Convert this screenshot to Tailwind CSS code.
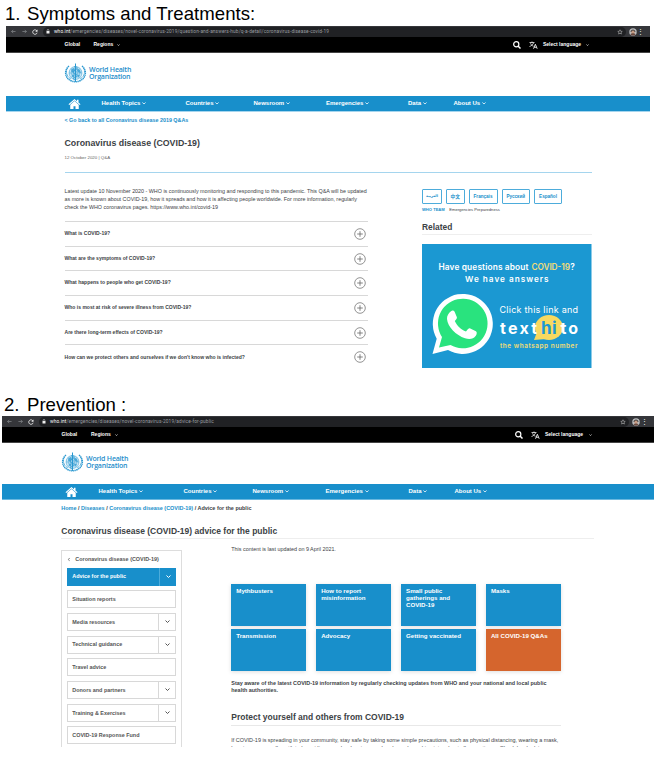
<!DOCTYPE html>
<html lang="en">
<head>
<meta charset="utf-8">
<title>WHO resources</title>
<script src="https://cdn.jsdelivr.net/npm/@tailwindcss/browser@4"></script>
</head>
<body class="bg-white">
<svg class="hidden">
  <symbol id="chev" viewBox="0 0 10 6"><path d="M1 1l4 4 4-4" fill="none" stroke="currentColor" stroke-width="2"/></symbol>
  <symbol id="home" viewBox="0 0 24 20"><path d="M12 0L0 10.500l1.500 1.600L12 3l10.500 9.100L24 10.500l-4-3.500V1.500h-3v2.900z"/><path d="M12 4.100L3.500 11.500V20h6.500v-5.500h4V20h6.500v-8.500z"/></symbol>
  <symbol id="plus" viewBox="0 0 12 12"><circle cx="6" cy="6" r="5.300" fill="none" stroke="#777" stroke-width=".8"/><path d="M6 3.200v5.600M3.200 6h5.600" stroke="#666" stroke-width=".8"/></symbol>
  <symbol id="search" viewBox="0 0 16 16"><circle cx="6.500" cy="6.500" r="5.200" fill="none" stroke="currentColor" stroke-width="2.400"/><path d="M10 10l5 5" stroke="currentColor" stroke-width="3"/></symbol>
  <symbol id="lang" viewBox="0 0 18 16"><path d="M1 3h10M6 1v2M3 4.500c1 3 4 5.500 6 6M9 4C8 7 4.500 10 1 11" fill="none" stroke="currentColor" stroke-width="1.500"/><path d="M9 15.500l3.700-9 3.700 9M10.300 12.500h4.800" fill="none" stroke="currentColor" stroke-width="1.700"/></symbol>
  <symbol id="emblem" viewBox="0 0 46 40">
    <g fill="none" stroke="#2a98d0">
      <circle cx="23" cy="20" r="13" fill="#c5e4f4" stroke-width="1"/>
      <circle cx="23" cy="20" r="8.500" stroke-width=".8"/><circle cx="23" cy="20" r="4.500" stroke-width=".8"/>
      <path d="M10 20h26M14 11l18 18M32 11L14 29" stroke-width=".7"/>
      <path d="M15 12l5-2 2 4-4 5-4-2zM27 11l5 3 2 6-5-1-3-4zM16 23l5 1-1 6-4-3zM27 23l5 1-4 6z" fill="#4aa8d8" stroke="none"/>
      <path d="M23 1v37" stroke-width="2"/>
      <path d="M20 8c7-3 8 4 3 6s-7 6-1 8 5 5 0 7-3 4 0 5" stroke-width="1.700"/>
      <path d="M10 6C0 14 1 29 13 35c4 2 7 2 10 3M36 6c10 8 9 23-3 29-4 2-7 2-10 3" stroke-width="2.800" stroke-dasharray="2.800 1"/>
      <path d="M7 10C3 17 5 27 14 32M39 10c4 7 2 17-7 22" stroke-width="1.800" stroke-dasharray="2 1"/>
    </g>
  </symbol>
  <symbol id="star" viewBox="0 0 12 12"><path d="M6 1.500l1.300 3 3.200.3-2.400 2.100.7 3.200L6 8.400l-2.800 1.700.7-3.200L1.500 4.800l3.200-.3z" fill="none" stroke="#ccc" stroke-width="1"/></symbol>
  <symbol id="avatar" viewBox="0 0 16 16"><circle cx="8" cy="8" r="7.500" fill="#b9bbbd"/><path d="M3 8c0-7 10-7 10 0z" fill="#4a4542"/><circle cx="8" cy="8.300" r="3.200" fill="#c79b83"/><path d="M3 13c1-3 9-3 10 0-2 3-8 3-10 0z" fill="#6d4b40"/></symbol>
  <symbol id="arrow" viewBox="0 0 12 10"><path d="M11 5H1.500M5.500 1l-4 4 4 4" fill="none" stroke="currentColor" stroke-width="1.400"/></symbol>
  <symbol id="reload" viewBox="0 0 12 12"><path d="M10 4A4.500 4.500 0 1 0 10.300 7.500" fill="none" stroke="#eee" stroke-width="1.800"/><path d="M11 .8v4.500H6.500z" fill="#eee"/></symbol>
  <symbol id="lock" viewBox="0 0 8 10"><path d="M1 4h6v5H1z" fill="#eee"/><path d="M2.300 4V2.500a1.700 1.700 0 0 1 3.400 0V4" fill="none" stroke="#eee" stroke-width="1"/></symbol>
</svg>

<main class="w-[657px] h-[770px] overflow-hidden font-['Liberation_Sans',Arial,sans-serif] text-[#3c4245] whitespace-nowrap">
  <h1 class="h-[26px] pl-[5px] pt-[3px] flex text-[18.600px] leading-[21px] text-black"><span class="w-[22px]">1.</span><span class="tracking-[.04px]">Symptoms and Treatments:</span></h1>

  <section class="ml-[6px] w-[644px] h-[364px]">
    <div class="h-[11px] bg-[#35363a] flex items-center pl-[5px] pr-[5px] text-[#9a9da1]">
      <svg class="w-[5px] h-[5px]"><use href="#arrow"/></svg>
      <svg class="ml-[6px] w-[5px] h-[5px] rotate-180"><use href="#arrow"/></svg>
      <svg class="ml-[5px] w-[6px] h-[6px]"><use href="#reload"/></svg>
      <div class="ml-[5px] w-[586px] h-[10px] rounded-full bg-[#202124] flex items-center pl-[3px] pr-[3px]">
        <svg class="w-[4px] h-[5px]"><use href="#lock"/></svg>
        <span class="ml-[4px] pt-[1px] font-['Roboto'] text-[4.800px] tracking-[.112px] leading-none"><span class="text-white">who.int</span>/emergencies/diseases/novel-coronavirus-2019/question-and-answers-hub/q-a-detail/coronavirus-disease-covid-19</span>
        <svg class="ml-auto w-[6px] h-[6px]"><use href="#star"/></svg>
      </div>
      <svg class="ml-[3px] w-[8px] h-[8px]"><use href="#avatar"/></svg>
      <span class="ml-auto mr-[1px] text-[7px] leading-none text-white">⋮</span>
    </div>
    <div class="h-[16px] bg-black border-b border-[#444] text-white flex items-center pt-[1px] pl-[58.500px] text-[5px] font-bold">
      <span class="w-[29px]">Global</span><span class="w-[23.500px]">Regions</span><svg class="w-[3px] h-[2px]"><use href="#chev"/></svg>
      <svg class="ml-[393px] w-[8px] h-[8px]"><use href="#search"/></svg>
      <svg class="ml-[8px] w-[9px] h-[8px]"><use href="#lang"/></svg>
      <span class="ml-[5px] w-[43px]">Select language</span><svg class="w-[3px] h-[2px]"><use href="#chev"/></svg>
    </div>
    <div class="h-[43px] pl-[58px] pt-[10px] flex text-[#1e8dcb]">
      <svg class="w-[23px] h-[20px]"><use href="#emblem"/></svg>
      <div class="ml-[2px] pt-[3px] font-['Open_Sans'] font-semibold text-[7px] tracking-[-.2px] leading-[7.300px]"><div>World Health</div><div>Organization</div></div>
    </div>
    <nav class="h-[15px] bg-[#188fcb] shadow-[0_1px_0_#a5d5ee] text-white flex items-center pl-[62px] text-[6px] font-bold">
      <svg class="w-[13px] h-[10px] fill-white"><use href="#home"/></svg>
      <span class="ml-[20.500px] w-[84px]">Health Topics <svg class="inline w-[4px] h-[2.500px]"><use href="#chev"/></svg></span>
      <span class="w-[68px]">Countries <svg class="inline w-[4px] h-[2.500px]"><use href="#chev"/></svg></span>
      <span class="w-[72.500px]">Newsroom <svg class="inline w-[4px] h-[2.500px]"><use href="#chev"/></svg></span>
      <span class="w-[82px]">Emergencies <svg class="inline w-[4px] h-[2.500px]"><use href="#chev"/></svg></span>
      <span class="w-[45.500px]">Data <svg class="inline w-[4px] h-[2.500px]"><use href="#chev"/></svg></span>
      <span>About Us <svg class="inline w-[4px] h-[2.500px]"><use href="#chev"/></svg></span>
    </nav>
    <div class="ml-[58.500px] w-[527px]">
      <div class="pt-[6px] h-[26px] text-[5.370px] leading-[7px] font-bold text-[#188fcb]">&lt; Go back to all Coronavirus disease 2019 Q&amp;As</div>
      <h2 class="h-[17px] text-[8.800px] leading-[12px] font-bold">Coronavirus disease (COVID-19)</h2>
      <div class="h-[19px] border-b border-[#a5d5ee] text-[4.400px] leading-[8px] text-[#666]">12 October 2020 | Q&amp;A</div>
      <div class="flex">
        <div class="w-[303.500px] pt-[14px]">
          <p class="h-[34px] text-[5.360px] leading-[8px]">Latest update 10 November 2020 - WHO is continuously monitoring and responding to this pandemic. This Q&amp;A will be updated<br>as more is known about COVID-19, how it spreads and how it is affecting people worldwide. For more information, regularly<br>check the WHO coronavirus pages. https://www.who.int/covid-19</p>
          <div class="text-[5.040px] font-bold">
            <div class="h-[24.700px] border-t border-[#d8d8d8] flex items-center justify-between pr-[2px]"><span>What is COVID-19?</span><svg class="w-[12px] h-[12px]"><use href="#plus"/></svg></div>
            <div class="h-[24.700px] border-t border-[#d8d8d8] flex items-center justify-between pr-[2px]"><span>What are the symptoms of COVID-19?</span><svg class="w-[12px] h-[12px]"><use href="#plus"/></svg></div>
            <div class="h-[24.700px] border-t border-[#d8d8d8] flex items-center justify-between pr-[2px]"><span>What happens to people who get COVID-19?</span><svg class="w-[12px] h-[12px]"><use href="#plus"/></svg></div>
            <div class="h-[24.700px] border-t border-[#d8d8d8] flex items-center justify-between pr-[2px]"><span>Who is most at risk of severe illness from COVID-19?</span><svg class="w-[12px] h-[12px]"><use href="#plus"/></svg></div>
            <div class="h-[24.700px] border-t border-[#d8d8d8] flex items-center justify-between pr-[2px]"><span>Are there long-term effects of COVID-19?</span><svg class="w-[12px] h-[12px]"><use href="#plus"/></svg></div>
            <div class="h-[24.700px] border-t border-[#d8d8d8] flex items-center justify-between pr-[2px]"><span>How can we protect others and ourselves if we don't know who is infected?</span><svg class="w-[12px] h-[12px]"><use href="#plus"/></svg></div>
          </div>
        </div>
        <div class="ml-[54px] w-[169.500px] pt-[16px]">
          <div class="flex gap-[4px] text-[4.600px] leading-[13px] font-bold text-[#188fcb] text-center font-['Liberation_Sans','DejaVu_Sans','Noto_Sans_CJK_SC',sans-serif]">
            <span class="w-[20px] h-[15px] border border-[#4dacdb] rounded-[1px] text-[3.600px]">العربية</span>
            <span class="w-[18.500px] h-[15px] border border-[#4dacdb] rounded-[1px] text-[4.700px]">中文</span>
            <span class="w-[29px] h-[15px] border border-[#4dacdb] rounded-[1px]">Français</span>
            <span class="w-[28.500px] h-[15px] border border-[#4dacdb] rounded-[1px]">Русский</span>
            <span class="w-[28px] h-[15px] border border-[#4dacdb] rounded-[1px]">Español</span>
          </div>
          <div class="h-[19px] pt-[3px] text-[4.100px] leading-[6px]"><b class="text-[#188fcb]">WHO TEAM</b><span class="ml-[4.500px]">Emergencies Preparedness</span></div>
          <h3 class="h-[12px] border-b border-[#eee] text-[8.400px] leading-[9px] font-bold">Related</h3>
          <svg class="mt-[9px] block w-[169.500px] h-[124px]" viewBox="0 0 169.500 124" font-family="Inter, sans-serif">
            <path d="M0 0h169.500v124H0z" fill="#1b98d2"/>
            <text x="16.500" y="26" font-size="8.300" fill="#fff" font-weight="600" textLength="90">Have questions about</text>
            <text x="109.500" y="26" font-size="8.300" fill="#f0dc78" font-weight="600" textLength="38.500">COVID-19</text>
            <text x="148.200" y="26" font-size="8.300" fill="#fff" font-weight="600">?</text>
            <text x="43" y="37.500" font-size="8.200" fill="#fff" font-weight="600" textLength="83.500">We have answers</text>
            <path d="M10.500 110l4.200-15.300A30 30 0 1 1 26 106z" fill="#fff"/>
            <path d="M17 103.500l3-10.500A24.800 24.800 0 1 1 28.500 101z" fill="#29e37e"/>
            <path d="M29 67.300c1.300-1.200 3-.9 3.700.8l2.100 4.800c.5 1.200-.3 2.100-2 4 2.800 5.500 6 8.300 11.200 10.700 2.200-2.800 3-3.700 4.300-3.100l5.600 2.800c1.200.7 1.100 2.700-.1 4.500-2.300 3.300-6.300 4.100-10.800 2.500-9-3-17.300-11.500-18-19.300-.2-3.200 1.500-5.700 4-7.700z" fill="#fff"/>
            <text x="77.500" y="68.500" font-size="9" fill="#fff" textLength="78.500">Click this link and</text>
            <ellipse cx="127" cy="83.500" rx="14" ry="12.500" fill="#f7d95f"/><path d="M115 88l-3 8 12-1z" fill="#f7d95f"/>
            <text x="78" y="89.500" font-size="16" font-weight="700" fill="#fff" textLength="37">text</text>
            <text x="119" y="89.500" font-size="17" font-weight="700" fill="#1b98d2" textLength="15.500">hi</text>
            <text x="138.500" y="89.500" font-size="16" font-weight="700" fill="#fff" textLength="17.500">to</text>
            <text x="78" y="103.500" font-size="6.400" font-weight="600" fill="#f0dc78" textLength="77.500">the whatsapp number</text>
          </svg>
        </div>
      </div>
    </div>
  </section>

  <h1 class="h-[26px] pl-[4px] pt-[4px] flex text-[18.600px] leading-[21px] text-black"><span class="w-[23px]">2.</span><span>Prevention :</span></h1>

  <section class="ml-[2px] w-[652px] h-[331px] overflow-hidden">
    <div class="h-[11px] bg-[#35363a] flex items-center pl-[5px] pr-[5px] text-[#9a9da1]">
      <svg class="w-[5px] h-[5px]"><use href="#arrow"/></svg>
      <svg class="ml-[6px] w-[5px] h-[5px] rotate-180"><use href="#arrow"/></svg>
      <svg class="ml-[5px] w-[6px] h-[6px]"><use href="#reload"/></svg>
      <div class="ml-[5px] w-[590px] h-[10px] rounded-full bg-[#202124] flex items-center pl-[3px] pr-[3px]">
        <svg class="w-[4px] h-[5px]"><use href="#lock"/></svg>
        <span class="ml-[4px] pt-[1px] font-['Roboto'] text-[4.800px] tracking-[.125px] leading-none"><span class="text-white">who.int</span>/emergencies/diseases/novel-coronavirus-2019/advice-for-public</span>
        <svg class="ml-auto w-[6px] h-[6px]"><use href="#star"/></svg>
      </div>
      <svg class="ml-[3px] w-[8px] h-[8px]"><use href="#avatar"/></svg>
      <span class="ml-auto mr-[1px] text-[7px] leading-none text-white">⋮</span>
    </div>
    <div class="h-[16px] bg-black border-b border-[#444] text-white flex items-center pt-[1px] pl-[59.500px] text-[5px] font-bold">
      <span class="w-[29.500px]">Global</span><span class="w-[23.500px]">Regions</span><svg class="w-[3px] h-[2px]"><use href="#chev"/></svg>
      <svg class="ml-[397px] w-[8px] h-[8px]"><use href="#search"/></svg>
      <svg class="ml-[8px] w-[9px] h-[8px]"><use href="#lang"/></svg>
      <span class="ml-[5.500px] w-[43.500px]">Select language</span><svg class="w-[3px] h-[2px]"><use href="#chev"/></svg>
    </div>
    <div class="h-[41px] pl-[59px] pt-[9px] flex text-[#1e8dcb]">
      <svg class="w-[23px] h-[20px]"><use href="#emblem"/></svg>
      <div class="ml-[2px] pt-[3px] font-['Open_Sans'] font-semibold text-[7px] tracking-[-.2px] leading-[7.300px]"><div>World Health</div><div>Organization</div></div>
    </div>
    <nav class="h-[15px] bg-[#188fcb] shadow-[0_1px_0_#6bb8df] text-white flex items-center pl-[63px] text-[6px] font-bold">
      <svg class="w-[13px] h-[10px] fill-white"><use href="#home"/></svg>
      <span class="ml-[20.500px] w-[85px]">Health Topics <svg class="inline w-[4px] h-[2.500px]"><use href="#chev"/></svg></span>
      <span class="w-[69px]">Countries <svg class="inline w-[4px] h-[2.500px]"><use href="#chev"/></svg></span>
      <span class="w-[73px]">Newsroom <svg class="inline w-[4px] h-[2.500px]"><use href="#chev"/></svg></span>
      <span class="w-[83px]">Emergencies <svg class="inline w-[4px] h-[2.500px]"><use href="#chev"/></svg></span>
      <span class="w-[46px]">Data <svg class="inline w-[4px] h-[2.500px]"><use href="#chev"/></svg></span>
      <span>About Us <svg class="inline w-[4px] h-[2.500px]"><use href="#chev"/></svg></span>
    </nav>
    <div class="ml-[59.300px] w-[532.700px]">
      <div class="pt-[5px] h-[26px] text-[5.460px] leading-[8px] font-bold"><span class="text-[#188fcb]">Home</span> / <span class="text-[#188fcb]">Diseases</span> / <span class="text-[#188fcb]">Coronavirus disease (COVID-19)</span> / Advice for the public</div>
      <h2 class="h-[14px] border-b border-[#eee] text-[8.500px] leading-[12px] font-bold">Coronavirus disease (COVID-19) advice for the public</h2>
      <div class="flex">
        <aside class="mt-[11px] w-[121px] h-[210px] border border-[#ddd] px-[5px] pt-[3.500px] text-[5.430px] font-bold text-[#555]">
          <div class="h-[13px] flex items-center pb-[3px]"><svg class="w-[4px] h-[3px] rotate-90"><use href="#chev"/></svg><span class="ml-[4px]">Coronavirus disease (COVID-19)</span></div>
          <div class="flex flex-col gap-[4.700px]">
            <div class="h-[18px] bg-[#188fcb] text-white flex items-center pl-[5px]"><span>Advice for the public</span><span class="ml-auto w-[17px] h-full border-l border-[#4dacdb] flex items-center justify-center"><svg class="w-[5px] h-[3px]"><use href="#chev"/></svg></span></div>
            <div class="h-[18px] border border-[#d8d8d8] flex items-center pl-[4px]"><span>Situation reports</span></div>
            <div class="h-[18px] border border-[#d8d8d8] flex items-center pl-[4px]"><span>Media resources</span><span class="ml-auto w-[17px] h-full border-l border-[#d8d8d8] flex items-center justify-center"><svg class="w-[5px] h-[3px]"><use href="#chev"/></svg></span></div>
            <div class="h-[18px] border border-[#d8d8d8] flex items-center pl-[4px]"><span>Technical guidance</span><span class="ml-auto w-[17px] h-full border-l border-[#d8d8d8] flex items-center justify-center"><svg class="w-[5px] h-[3px]"><use href="#chev"/></svg></span></div>
            <div class="h-[18px] border border-[#d8d8d8] flex items-center pl-[4px]"><span>Travel advice</span></div>
            <div class="h-[18px] border border-[#d8d8d8] flex items-center pl-[4px]"><span>Donors and partners</span><span class="ml-auto w-[17px] h-full border-l border-[#d8d8d8] flex items-center justify-center"><svg class="w-[5px] h-[3px]"><use href="#chev"/></svg></span></div>
            <div class="h-[18px] border border-[#d8d8d8] flex items-center pl-[4px]"><span>Training &amp; Exercises</span><span class="ml-auto w-[17px] h-full border-l border-[#d8d8d8] flex items-center justify-center"><svg class="w-[5px] h-[3px]"><use href="#chev"/></svg></span></div>
            <div class="h-[18px] border border-[#d8d8d8] flex items-center pl-[4px]"><span>COVID-19 Response Fund</span></div>
          </div>
        </aside>
        <div class="ml-[49px] w-[329.500px] pt-[6px]">
          <p class="h-[38.500px] text-[5.400px] leading-[8px]">This content is last updated on 9 April 2021.</p>
          <div class="grid grid-cols-4 gap-x-[10px] gap-y-[3px] text-[6.150px] leading-[6.800px] font-bold text-white">
            <div class="h-[42px] bg-[#188fcb] shadow-[0_1px_4px_#0002] pl-[5px] pt-[4.500px]">Mythbusters</div>
            <div class="h-[42px] bg-[#188fcb] shadow-[0_1px_4px_#0002] pl-[5px] pt-[4.500px]">How to report<br>misinformation</div>
            <div class="h-[42px] bg-[#188fcb] shadow-[0_1px_4px_#0002] pl-[5px] pt-[4.500px]">Small public<br>gatherings and<br>COVID-19</div>
            <div class="h-[42px] bg-[#188fcb] shadow-[0_1px_4px_#0002] pl-[5px] pt-[4.500px]">Masks</div>
            <div class="h-[42px] bg-[#188fcb] shadow-[0_1px_4px_#0002] pl-[5px] pt-[4.500px]">Transmission</div>
            <div class="h-[42px] bg-[#188fcb] shadow-[0_1px_4px_#0002] pl-[5px] pt-[4.500px]">Advocacy</div>
            <div class="h-[42px] bg-[#188fcb] shadow-[0_1px_4px_#0002] pl-[5px] pt-[4.500px]">Getting vaccinated</div>
            <div class="h-[42px] bg-[#d5652d] shadow-[0_1px_4px_#0002] pl-[5px] pt-[4.500px]">All COVID-19 Q&amp;As</div>
          </div>
          <p class="pt-[9px] h-[41px] text-[5.430px] leading-[7.800px] font-bold">Stay aware of the latest COVID-19 information by regularly checking updates from WHO and your national and local public<br>health authorities.</p>
          <h3 class="h-[14px] border-b border-[#e8e8e8] text-[8.470px] leading-[11px] font-bold">Protect yourself and others from COVID-19</h3>
          <p class="pt-[11.500px] text-[5.450px] leading-[7.500px]">If COVID-19 is spreading in your community, stay safe by taking some simple precautions, such as physical distancing, wearing a mask,<br>keeping rooms well ventilated, avoiding crowds, cleaning your hands, and coughing into a bent elbow or tissue. Check local advice</p>
        </div>
      </div>
    </div>
  </section>
</main>
</body>
</html>
